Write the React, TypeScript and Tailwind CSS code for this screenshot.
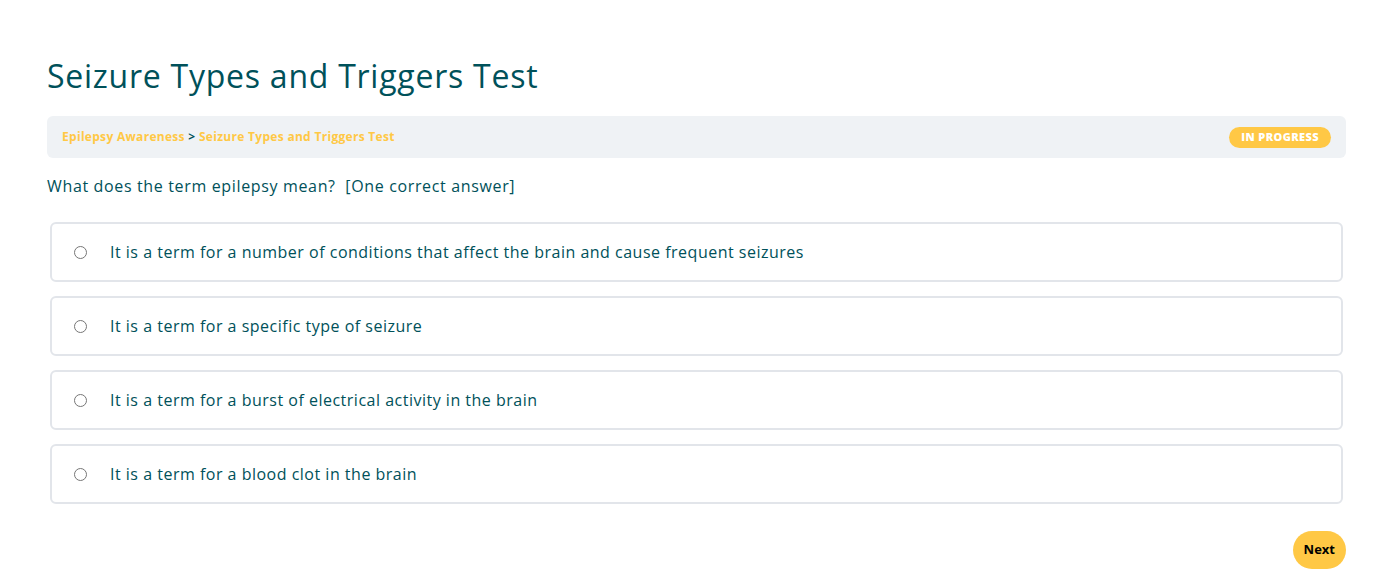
import { useState } from "react";

const options = [
  "It is a term for a number of conditions that affect the brain and cause frequent seizures",
  "It is a term for a specific type of seizure",
  "It is a term for a burst of electrical activity in the brain",
  "It is a term for a blood clot in the brain",
];

export default function App() {
  const [selected, setSelected] = useState<number | null>(null);

  return (
    <div className="min-h-screen bg-white font-['Open_Sans',sans-serif] text-[#00515a]">
      <div className="mx-[47px] pt-[56px]">
        <h1 className="text-[32px] leading-[40px] text-[#00515a] tracking-[0.75px]">Seizure Types and Triggers Test</h1>

        <div className="mt-[20px] flex h-[42px] items-center justify-between rounded-md bg-[#eff2f5] pl-[15px] pr-[15px]">
          <div className="text-[12px] font-bold tracking-[0.3px] text-[#ffc845]">
            Epilepsy Awareness <span className="text-[#00515a]">&gt;</span> Seizure Types and Triggers Test
          </div>
          <span className="flex h-[21px] items-center rounded-full bg-[#ffc845] px-3 text-[11px] font-extrabold uppercase tracking-[0.4px] text-white">
            In Progress
          </span>
        </div>

        <p className="mt-[17px] text-[16px] leading-[22px] tracking-[0.65px]">
          What does the term epilepsy mean?&nbsp; [One correct answer]
        </p>

        <div className="mx-[3px] mt-[25px] flex flex-col gap-[14px]">
          {options.map((opt, i) => (
            <label
              key={i}
              className="flex h-[60px] cursor-pointer items-center rounded-md border-2 border-[#e2e5ea] bg-white pl-[22px]"
              onClick={() => setSelected(i)}
            >
              <span className="flex h-[13px] w-[13px] items-center justify-center rounded-full border border-[#767676] bg-white">
                {selected === i && <span className="h-[7px] w-[7px] rounded-full bg-[#00515a]" />}
              </span>
              <span className="ml-[23px] text-[16px] tracking-[0.5px]">{opt}</span>
            </label>
          ))}
        </div>

        <div className="mt-[27px] flex justify-end">
          <button className="h-[38px] rounded-full bg-[#ffc845] px-[11px] text-[13px] font-bold text-black">
            Next
          </button>
        </div>
      </div>
    </div>
  );
}
